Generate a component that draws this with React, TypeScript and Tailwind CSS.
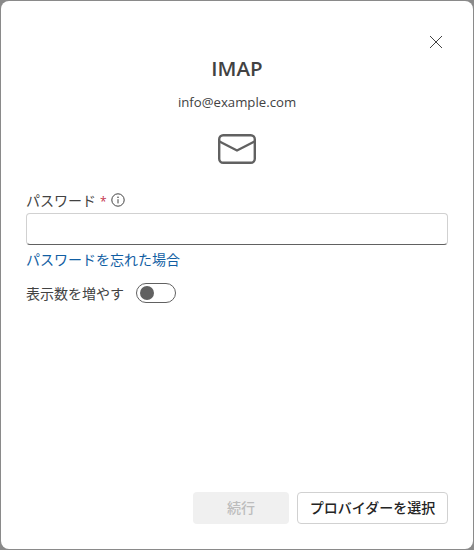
export default function App() {
  return (
    <div className="h-[550px] w-[474px] bg-[#8a8a8a] p-px font-['Open_Sans','Noto_Sans_CJK_JP',sans-serif]">
      <div className="relative flex h-[548px] flex-col rounded-lg bg-white px-[25px]">
        <button className="absolute right-[30px] top-[34px] text-[#424242]" aria-label="閉じる">
          <svg width="14" height="14" viewBox="0 0 14 14" fill="none" stroke="currentColor" strokeWidth="1" className="block">
            <path d="M1 1 L13 13 M13 1 L1 13" />
          </svg>
        </button>
        <h1 className="mt-[51px] text-center text-[20.5px] font-semibold leading-[32px] text-[#424242]">IMAP</h1>
        <p className="mt-[8px] text-center text-[13.2px] leading-[20px] text-[#424242]">info@example.com</p>
        <div className="mt-[22px] flex justify-center">
          <svg width="38" height="30" viewBox="0 0 38 30" fill="none" stroke="#616161" strokeWidth="2.4" className="block">
            <rect x="1.2" y="1.2" width="35.6" height="27.6" rx="4" />
            <path d="M1.5 7.5 L19 16.5 L36.5 7.5" />
          </svg>
        </div>
        <div className="mt-[26px] flex h-[20px] items-center text-[14px] text-[#424242]">
          <span>パスワード</span>
          <span className="ml-[4px] mt-[3px] text-[12px] text-[#c4314b]">*</span>
          <svg width="14" height="14" viewBox="0 0 14 14" fill="none" className="ml-[4px] block">
            <circle cx="7" cy="7" r="6.2" stroke="#424242" strokeWidth="1" />
            <path d="M7 6.2 V10.4" stroke="#424242" strokeWidth="1" />
            <circle cx="7" cy="4.2" r="0.8" fill="#424242" />
          </svg>
        </div>
        <input className="mt-[3px] h-[32px] w-full rounded-[4px] border border-[#d1d1d1] border-b-[#616161] bg-white outline-none" />
        <a className="mt-[5px] block text-[14px] leading-[20px] text-[#115ea3]">パスワードを忘れた場合</a>
        <div className="mt-[13px] flex h-[20px] items-center gap-[12px] text-[14px] text-[#424242]">
          <span>表示数を増やす</span>
          <span className="flex h-[20px] w-[40px] items-center rounded-full border border-[#616161] px-[3px]">
            <span className="h-[14px] w-[14px] rounded-full bg-[#616161]" />
          </span>
        </div>
        <div className="mt-auto mb-[25px] flex justify-end gap-[8px]">
          <button className="h-[32px] w-[96px] rounded-[4px] bg-[#f0f0f0] pb-[2px] text-[14px] font-medium text-[#bdbdbd]">続行</button>
          <button className="h-[32px] w-[151px] rounded-[4px] border border-[#d1d1d1] bg-white pb-[2px] text-[14px] font-medium text-[#242424]">プロバイダーを選択</button>
        </div>
      </div>
    </div>
  );
}
